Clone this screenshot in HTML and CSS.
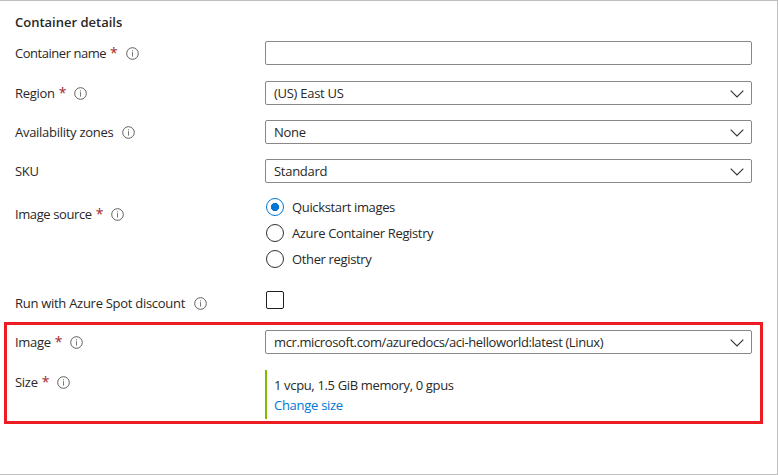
FILE: index.html
```
<!DOCTYPE html>
<html lang="en">
<head>
<meta charset="utf-8">
<title>Container details</title>
<link rel="stylesheet" href="styles.css">
</head>
<body>
<svg class="defs" width="0" height="0" aria-hidden="true">
  <symbol id="info" viewBox="0 0 13 13">
    <circle cx="6.5" cy="6.5" r="5.8" fill="none" stroke="#605e5c" stroke-width="1"/>
    <path d="M6.5 5.2V9.6M6.5 3.3V4.4" stroke="#777" stroke-width="1" fill="none"/>
  </symbol>
  <symbol id="chevron" viewBox="0 0 14 8">
    <path d="M.7 .7L7 7L13.3 .7" stroke="#323130" stroke-width="1.1" fill="none"/>
  </symbol>
</svg>
<main class="panel">
  <h1 class="title">Container details</h1>
  <div class="row row-name">
    <div class="label"><span class="tight">Container name</span><b class="req">*</b><svg class="info"><use href="#info"/></svg></div>
    <div class="field"></div>
  </div>
  <div class="row">
    <div class="label"><span>Region</span><b class="req">*</b><svg class="info"><use href="#info"/></svg></div>
    <div class="field"><span>(US) East US</span><svg class="chevron"><use href="#chevron"/></svg></div>
  </div>
  <div class="row">
    <div class="label"><span>Availability zones</span><svg class="info"><use href="#info"/></svg></div>
    <div class="field"><span>None</span><svg class="chevron"><use href="#chevron"/></svg></div>
  </div>
  <div class="row">
    <div class="label"><span>SKU</span></div>
    <div class="field"><span>Standard</span><svg class="chevron"><use href="#chevron"/></svg></div>
  </div>
  <div class="row row-source">
    <div class="label"><span class="snug">Image source</span><b class="req">*</b><svg class="info"><use href="#info"/></svg></div>
    <div class="radios">
      <div class="option"><i class="radio checked"></i><span>Quickstart images</span></div>
      <div class="option"><i class="radio"></i><span>Azure Container Registry</span></div>
      <div class="option"><i class="radio"></i><span>Other registry</span></div>
    </div>
  </div>
  <div class="row row-spot">
    <div class="label"><span>Run with Azure Spot discount</span><svg class="info"><use href="#info"/></svg></div>
    <i class="checkbox"></i>
  </div>
  <section class="highlight">
    <div class="row">
      <div class="label"><span>Image</span><b class="req">*</b><svg class="info"><use href="#info"/></svg></div>
      <div class="field"><span class="image-name">mcr.microsoft.com/azuredocs/aci-helloworld:latest (Linux)</span><svg class="chevron"><use href="#chevron"/></svg></div>
    </div>
    <div class="row row-size">
      <div class="label"><span>Size</span><b class="req">*</b><svg class="info"><use href="#info"/></svg></div>
      <div class="size"><span class="specs">1 vcpu, 1.5 GiB memory, 0 gpus</span><a class="link">Change size</a></div>
    </div>
  </section>
</main>
</body>
</html>
```
FILE: styles.css
```
* { box-sizing: border-box; }
body {
  margin: 0;
  background: #fff;
  color: #292827;
  font: 13px/20px "Segoe UI", "Open Sans", "Noto Sans", sans-serif;
  letter-spacing: -0.28px;
}
.defs { display: none; }
.panel {
  width: 778px;
  height: 475px;
  padding: 11px 0 0 15px;
  border: solid #c0c0c0;
  border-width: 1px 1px 1px 0;
}
.title { margin: 0 0 9px; font-size: 13px; line-height: 20px; font-weight: 600; letter-spacing: 0; }
.row {
  display: grid;
  grid-template-columns: 250px 487px;
  align-items: start;
  height: 24px;
  margin-bottom: 15px;
}
.row-name { margin-bottom: 16px; }
.label { display: flex; align-items: center; height: 25px; white-space: nowrap; }
.label span, .req { padding-bottom: 2px; }
.tight { letter-spacing: -0.47px; }
.snug { letter-spacing: -0.4px; }
.req { margin-left: 4px; width: 7px; color: #a4262c; font-weight: 400; font-size: 14px; }
.info { width: 13px; height: 13px; margin-left: 8.6px; }
.field {
  display: flex;
  align-items: center;
  justify-content: space-between;
  height: 24px;
  padding: 0 8px;
  border: 1px solid #8a8886;
  border-radius: 2px;
  white-space: nowrap;
}
.chevron { width: 14px; height: 8px; margin: 1px -0.5px 0 0; }
.image-name { letter-spacing: -0.39px; }
.row-source { height: 78px; }
.row-source .label { height: 33px; }
.radios { padding-left: 1px; }
.option { display: flex; align-items: center; gap: 8px; height: 18px; margin-bottom: 8px; letter-spacing: -0.35px; }
.radio { width: 18px; height: 18px; border: 1px solid #323130; border-radius: 50%; }
.radio.checked {
  border-color: #0078d4;
  background: radial-gradient(circle, #0078d4 3.8px, transparent 4.4px);
}
.row-spot { height: 18px; margin-bottom: 13px; }
.checkbox { width: 18px; height: 18px; margin-left: 1px; border: 1px solid #201f1e; border-radius: 2px; }
.highlight {
  width: 759px;
  height: 102px;
  margin-left: -11px;
  padding: 5px 0 0 8px;
  border: 3px solid #ed1c24;
}
.highlight .row { margin-bottom: 16px; }
.size {
  display: flex;
  flex-direction: column;
  height: 49px;
  padding: 5px 0 0 7px;
  border-left: 2px solid #7fba00;
}
.specs { letter-spacing: -0.35px; }
.link { color: #0078d4; }
```
